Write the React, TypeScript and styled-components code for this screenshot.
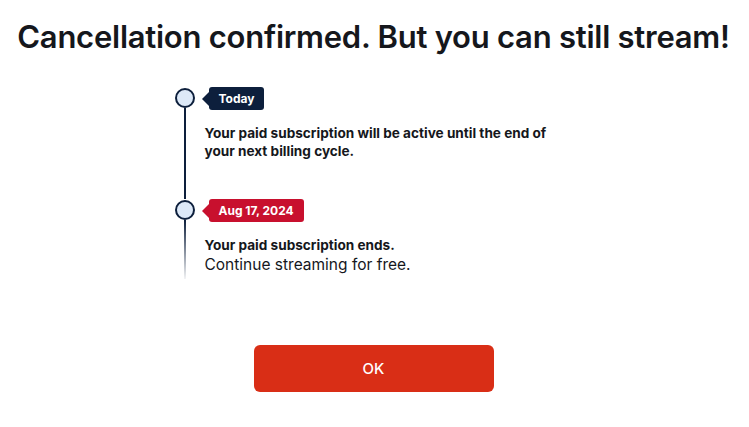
import styled, { createGlobalStyle } from 'styled-components';

const GlobalStyle = createGlobalStyle`
    body {
        margin: 0;
        background: #fff;
        font-family: Inter, "Noto Sans", sans-serif;
        color: #15171c;
    }
`

const Page = styled.div`
    display: flex;
    flex-direction: column;
    align-items: center;
    padding-top: 17px;
    padding-right: 2px;
`

const Title = styled.h1`
    margin: 0;
    font-size: 31px;
    font-weight: 600;
    letter-spacing: -0.25px;
    line-height: 40px;
    color: #15171c;
`

const Timeline = styled.ul`
    list-style: none;
    margin: 30px 0 0;
    padding: 0;
    width: 400px;
`

const Item = styled.li`
    display: grid;
    grid-template-columns: 22px 1fr;
    column-gap: 9px;
`

const Marker = styled.div`
    display: flex;
    flex-direction: column;
    align-items: center;
    padding-top: 1px;
`

const Dot = styled.span`
    box-sizing: border-box;
    width: 20px;
    height: 20px;
    border-radius: 50%;
    border: 2px solid #0d1f3c;
    background: #dde9f8;
    flex-shrink: 0;
`

const Rail = styled.span<{ $fade?: boolean }>`
    width: 2px;
    flex: 1;
    background: ${p => p.$fade
        ? 'linear-gradient(to bottom, #0d1f3c, rgba(13, 31, 60, 0.05))'
        : '#0d1f3c'};
`

const Body = styled.div<{ $last?: boolean }>`
    padding-bottom: ${p => p.$last ? '4px' : '39px'};
`

const Tag = styled.span<{ $tone: 'navy' | 'red' }>`
    position: relative;
    display: inline-block;
    margin-left: 4px;
    padding: 0 10px;
    height: 23px;
    line-height: 23px;
    border-radius: 3px;
    font-size: 12px;
    font-weight: 700;
    color: #fff;
    background: ${p => p.$tone === 'red' ? '#c8102e' : '#0d1f3c'};

    &::before {
        content: '';
        position: absolute;
        left: -7px;
        top: 50%;
        margin-top: -7px;
        border-top: 7px solid transparent;
        border-bottom: 7px solid transparent;
        border-right: 7px solid ${p => p.$tone === 'red' ? '#c8102e' : '#0d1f3c'};
    }
`

const Strong = styled.p`
    margin: 14px 0 0;
    font-size: 13.6px;
    font-weight: 700;
    line-height: 18px;
    max-width: 360px;
`

const Plain = styled.p`
    margin: 1px 0 0;
    font-size: 15.5px;
    font-weight: 400;
    line-height: 20px;
`

const OkButton = styled.button`
    margin-top: 66px;
    width: 240px;
    height: 47px;
    border: none;
    border-radius: 6px;
    background: #d92e16;
    color: #fff;
    font-family: inherit;
    font-size: 15px;
    font-weight: 500;
    cursor: pointer;
`

const App = () => {
    return (
        <>
            <GlobalStyle />
            <Page>
                <Title>Cancellation confirmed. But you can still stream!</Title>
                <Timeline>
                    <Item>
                        <Marker>
                            <Dot />
                            <Rail />
                        </Marker>
                        <Body>
                            <Tag $tone="navy">Today</Tag>
                            <Strong>Your paid subscription will be active until the end of your next billing cycle.</Strong>
                        </Body>
                    </Item>
                    <Item>
                        <Marker>
                            <Dot />
                            <Rail $fade />
                        </Marker>
                        <Body $last>
                            <Tag $tone="red">Aug 17, 2024</Tag>
                            <Strong>Your paid subscription ends.</Strong>
                            <Plain>Continue streaming for free.</Plain>
                        </Body>
                    </Item>
                </Timeline>
                <OkButton>OK</OkButton>
            </Page>
        </>
    )
}

export default App
